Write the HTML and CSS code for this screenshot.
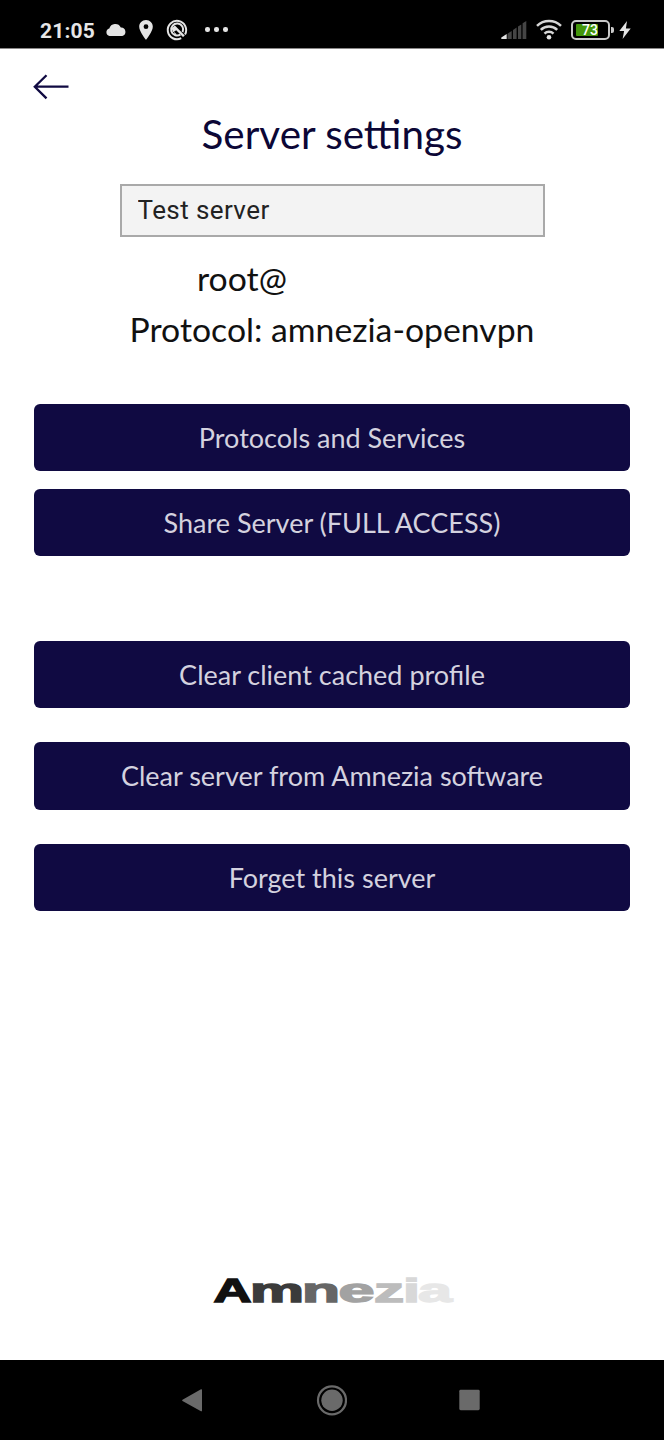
FILE: index.html
```html
<!DOCTYPE html>
<html lang="en">
<head>
<meta charset="utf-8">
<title>Server settings</title>
<link rel="stylesheet" href="styles.css">
</head>
<body>
<div class="screen">
  <header class="status-bar">
    <div class="status-left">
      <span class="clock">21:05</span>
      <svg class="cloud" width="22" height="14" viewBox="0 0 22 14"><path d="M4.6 13A3.9 3.9 0 0 1 4.3 5.4A6.2 6.2 0 0 1 15.8 4.4A4.4 4.4 0 0 1 17.3 13Z"/></svg>
      <svg class="pin" width="14" height="20" viewBox="0 0 14 20"><path fill-rule="evenodd" d="M7 0C3.1 0 .2 3 .2 6.7C.2 11.5 7 19.7 7 19.7S13.8 11.5 13.8 6.7C13.8 3 10.9 0 7 0ZM7 4.3A2.4 2.4 0 1 1 7 9.1A2.4 2.4 0 0 1 7 4.3Z"/></svg>
      <svg class="badge" width="22" height="22" viewBox="0 0 22 22"><path class="line" d="M15.2 19.2A9.2 9.2 0 1 1 19 15.5"/><path class="line" d="M14.4 15.6A6 6 0 1 1 16.6 13.1"/><path d="M5.6 9.2L8.9 6.4L18.8 16.4L17 18L10.2 11.2L7.2 13.2Z"/><path d="M8 12.8L10.8 15.5L8.6 16Z"/></svg>
      <span class="dots"><i></i><i></i><i></i></span>
    </div>
    <div class="status-right">
      <svg class="signal" width="26" height="20" viewBox="0 0 26 20"><path class="dim" d="M6.5 13.7L10.7 10.9V19H6.5ZM12 10L15.6 7.6V19H12ZM17 6.6L20.3 4.4V19H17ZM21.6 3.3L25.3.9V19H21.6Z"/><path d="M.3 17.5L5.7 14V19H.3Z"/></svg>
      <svg class="wifi" width="28" height="20" viewBox="0 0 28 20"><path class="arc" d="M2 5.8A17.3 17.3 0 0 1 26 5.8M5.8 9.9A11.6 11.6 0 0 1 22.2 9.9M9.5 13.7A6.4 6.4 0 0 1 18.5 13.7"/><circle cx="14" cy="17.2" r="2.3"/></svg>
      <div class="battery"><span class="battery-level"></span><span class="battery-text">73</span></div>
      <span class="battery-tip"></span>
      <svg class="bolt" width="12" height="18" viewBox="0 0 12 18"><path d="M8 0L.3 10H5.1L3.6 18L11.7 7.6H6.9Z"/></svg>
    </div>
  </header>

  <main class="content">
    <svg class="back" width="38" height="28" viewBox="0 0 38 28"><path d="M14.5 2.2L2.8 13.7L14.5 25.4M2.8 13.7H36.5"/></svg>
    <h1 class="title">Server settings</h1>
    <input class="name-field" type="text" value="Test server" aria-label="Server name">
    <p class="login">root@</p>
    <p class="protocol">Protocol: amnezia-openvpn</p>

    <div class="group main-actions">
      <button class="button">Protocols and Services</button>
      <button class="button">Share Server (FULL ACCESS)</button>
    </div>
    <div class="group clear-actions">
      <button class="button">Clear client cached profile</button>
      <button class="button">Clear server from Amnezia software</button>
      <button class="button">Forget this server</button>
    </div>

    <svg class="logo" width="264" height="54" viewBox="0 0 264 54" aria-label="Amnezia">
      <text class="l1" x="14.5" y="37" textLength="38" lengthAdjust="spacingAndGlyphs">A</text>
      <text class="l2" x="51" y="37" textLength="54" lengthAdjust="spacingAndGlyphs">m</text>
      <text class="l3" x="103" y="37" textLength="38" lengthAdjust="spacingAndGlyphs">n</text>
      <text class="l4" x="139.5" y="37" textLength="36" lengthAdjust="spacingAndGlyphs">e</text>
      <text class="l5" x="175" y="37" textLength="30" lengthAdjust="spacingAndGlyphs">z</text>
      <text class="l6" x="204" y="37" textLength="17" lengthAdjust="spacingAndGlyphs">i</text>
      <text class="l7" x="219" y="37" textLength="34" lengthAdjust="spacingAndGlyphs">a</text>
    </svg>
  </main>

  <nav class="nav-bar">
    <svg width="22" height="26" viewBox="0 0 22 26"><path d="M1.5 12.8L20 2.3Q21 1.9 21 3V23.5Q21 24.7 20 24.2L1.5 13.9Q.6 13.3 1.5 12.8Z"/></svg>
    <svg width="32" height="32" viewBox="0 0 32 32"><circle class="ring" cx="17" cy="16.3" r="14"/><circle cx="17" cy="16.3" r="10.7"/></svg>
    <svg width="22" height="22" viewBox="0 0 22 22"><rect x=".3" y=".8" width="20.4" height="20.4" rx="1.4"/></svg>
  </nav>
</div>
</body>
</html>
```
FILE: styles.css
```css
* { box-sizing: border-box; }
body { margin: 0; background: #fff; font-family: Lato, sans-serif; }
.screen { width: 664px; height: 1440px; display: flex; flex-direction: column; }

.status-bar { height: 49px; flex: none; display: flex; justify-content: space-between; align-items: center; padding: 11px 33.5px 0 40px; background: #000; border-bottom: 1px solid #8a8888; }
.status-left, .status-right { display: flex; align-items: center; }
.status-bar svg { fill: #e4e4e4; display: block; overflow: visible; }
.clock { font: 700 21px/24px Roboto, sans-serif; letter-spacing: .2px; color: #e6e6e6; width: 65px; padding-top: 2px; }
.cloud { margin-right: 12px; }
.pin { margin-right: 13px; }
.badge { margin-right: 17px; }
.badge .line { fill: none; stroke: #e4e4e4; stroke-width: 2; }
.dots { display: flex; gap: 4.5px; }
.dots i { width: 4.5px; height: 4.5px; border-radius: 50%; background: #e4e4e4; }
.signal { margin-right: 8px; }
.signal .dim { fill: #454545; }
.wifi { margin-right: 8px; }
.wifi .arc { fill: none; stroke: #d6d6d6; stroke-width: 2.5; }
.battery { position: relative; width: 39px; height: 20px; border: 2px solid #c9c9c9; border-radius: 5px; }
.battery-level { position: absolute; left: 3px; top: 2px; width: 22px; height: 12px; background: #43960b; border-radius: 1px; }
.battery-text { position: absolute; inset: 0; font: 500 14px/17px Roboto, sans-serif; color: #fff; text-align: center; }
.battery-tip { width: 3px; height: 6px; background: #c9c9c9; border-radius: 0 2px 2px 0; margin: 0 5px 0 1px; }

.content { flex: 1; display: flex; flex-direction: column; align-items: center; padding: 24px 34px 0; }
.back { align-self: flex-start; margin-left: -2px; flex: none; fill: none; stroke: #100a42; stroke-width: 2.3; }
.title { margin: 7px 0 0; height: 52px; font-size: 40.4px; line-height: 52px; font-weight: 400; color: #0c0736; white-space: nowrap; }
.name-field { margin: 24px 0 0; width: 425px; height: 53px; padding: 0 16px 2px; border: 2px solid #a9a9a9; border-radius: 0; background: #f3f3f3; color: #222; font: 400 26px/30px Roboto, sans-serif; letter-spacing: .4px; outline: none; }
.login, .protocol { margin: 0; color: #111; font-size: 33.75px; line-height: 40px; white-space: nowrap; }
.login { margin: 21px 0 0; width: 270px; }
.protocol { margin-top: 11px; }
.group { width: 596px; display: flex; flex-direction: column; }
.main-actions { margin-top: 55px; gap: 17.5px; }
.clear-actions { margin-top: 85px; gap: 34.3px; }
.button { height: 67.2px; padding: 1px 0 0; border: 0; border-radius: 6px; background: #100a42; color: #d4d2df; font: 400 27px/34px Lato, sans-serif; }
.logo { margin: auto 6px 41px 3px; flex: none; font: 700 33px "Liberation Sans", sans-serif; stroke-width: 1.4; }
.l1 { fill: #111; stroke: #111; }
.l2 { fill: #3b3b3b; stroke: #3b3b3b; }
.l3 { fill: #666; stroke: #666; }
.l4 { fill: #a2a2a2; stroke: #a2a2a2; }
.l5 { fill: #bcbcbc; stroke: #bcbcbc; }
.l6 { fill: #d8d8d8; stroke: #d8d8d8; }
.l7 { fill: #e7e7e7; stroke: #e7e7e7; }

.nav-bar { height: 80px; flex: none; display: flex; justify-content: space-between; align-items: center; padding: 0 183px 0 181px; background: #000; }
.nav-bar svg { fill: #6a6a6a; }
.nav-bar .ring { fill: none; stroke: #6a6a6a; stroke-width: 2.2; }
```
